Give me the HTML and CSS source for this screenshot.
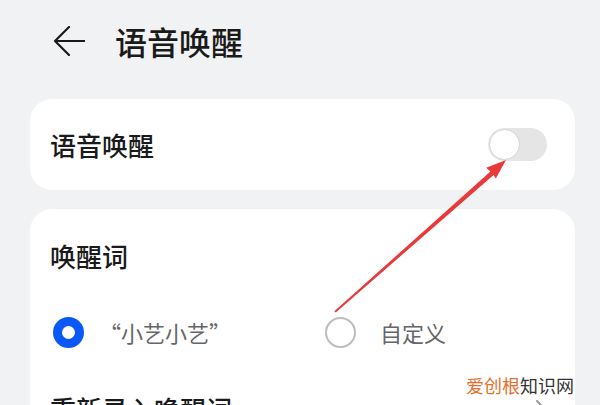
FILE: index.html
```html
<!DOCTYPE html>
<html lang="zh-CN">
<head>
<meta charset="utf-8">
<title>语音唤醒</title>
<link rel="stylesheet" href="styles.css">
</head>
<body>
<div class="page">
  <header class="header">
    <svg class="back" width="32" height="30" viewBox="0 0 32 30">
      <path d="M16 1 L2 15 L16 29 M2 15 H32" fill="none" stroke="#1a1a1a" stroke-width="2.2" stroke-linecap="round" stroke-linejoin="round"/>
    </svg>
    <h1 class="title">语音唤醒</h1>
  </header>

  <section class="card card-switch">
    <span class="label">语音唤醒</span>
    <span class="toggle"><span class="knob"></span></span>
  </section>

  <section class="card card-words">
    <div class="label section-title">唤醒词</div>
    <div class="options">
      <div class="option option-first">
        <span class="radio radio-on"></span>
        <span class="opt-text">“小艺小艺”</span>
      </div>
      <div class="option">
        <span class="radio"></span>
        <span class="opt-text">自定义</span>
      </div>
    </div>
    <div class="row">
      <span class="label">重新录入唤醒词</span>
      <svg class="chev" width="12" height="20" viewBox="0 0 12 20"><path d="M2 2 L10 10 L2 18" fill="none" stroke="#999" stroke-width="2" stroke-linecap="round" stroke-linejoin="round"/></svg>
    </div>
  </section>
</div>

<svg class="annot" width="600" height="405" viewBox="0 0 600 405">
  <polygon points="334.3,311.2 490.4,171.6 486.2,167.8 506,160 495.8,178.6 493.6,174.9 335.8,312.6" fill="#e83a3a"/>
</svg>

<div class="watermark"><span class="wm-a">爱创根</span><span class="wm-b">知识网</span></div>
</body>
</html>
```

FILE: styles.css
```css
html, body {
  margin: 0;
  padding: 0;
}
body {
  width: 600px;
  height: 405px;
  overflow: hidden;
  background: #f1f2f4;
  font-family: "Noto Sans CJK SC", "Noto Sans", sans-serif;
  color: #1a1a1a;
  position: relative;
}
.page {
  padding: 0 25px 0 30px;
  height: 405px;
  overflow: hidden;
}
.header {
  height: 82px;
  display: flex;
  align-items: center;
  padding-left: 23px;
  margin-bottom: 17px;
}
.back {
  display: block;
}
.title {
  margin: 0 0 0 30px;
  font-size: 32px;
  line-height: 32px;
  font-weight: 500;
}
.card {
  background: #ffffff;
  border-radius: 22px;
}
.card-switch {
  height: 91px;
  display: flex;
  align-items: center;
  justify-content: space-between;
  padding: 0 28px 0 20px;
  margin-bottom: 19px;
}
.label {
  font-size: 26px;
  line-height: 26px;
  font-weight: 500;
}
.toggle {
  width: 59px;
  height: 33px;
  border-radius: 17px;
  background: #e5e5e5;
  display: flex;
  align-items: center;
}
.knob {
  width: 29px;
  height: 29px;
  border-radius: 50%;
  background: #fff;
  border: 1px solid #d6d6d6;
  margin-left: 1px;
}
.card-words {
  padding: 34px 20px 30px 20px;
  height: 300px;
}
.options {
  display: flex;
  align-items: center;
  margin-top: 47px;
  padding-left: 3px;
}
.option {
  display: flex;
  align-items: center;
  gap: 24px;
}
.option-first {
  width: 272px;
  gap: 15px;
}
.radio {
  width: 31px;
  height: 31px;
  box-sizing: border-box;
  border-radius: 50%;
  border: 2px solid #bdbdbd;
}
.radio-on {
  border: 9px solid #0a59f7;
}
.opt-text {
  font-size: 22px;
  line-height: 32px;
  color: #666;
}
.row {
  display: flex;
  align-items: center;
  justify-content: space-between;
  margin-top: 48px;
  padding-right: 8px;
}
.annot {
  position: absolute;
  left: 0;
  top: 0;
}
.watermark {
  position: absolute;
  left: 466px;
  top: 374px;
  font-size: 18px;
  line-height: 22px;
  font-family: "Noto Sans CJK SC", sans-serif;
}
.wm-a {
  color: #e2702e;
}
.wm-b {
  color: #333;
}
```
